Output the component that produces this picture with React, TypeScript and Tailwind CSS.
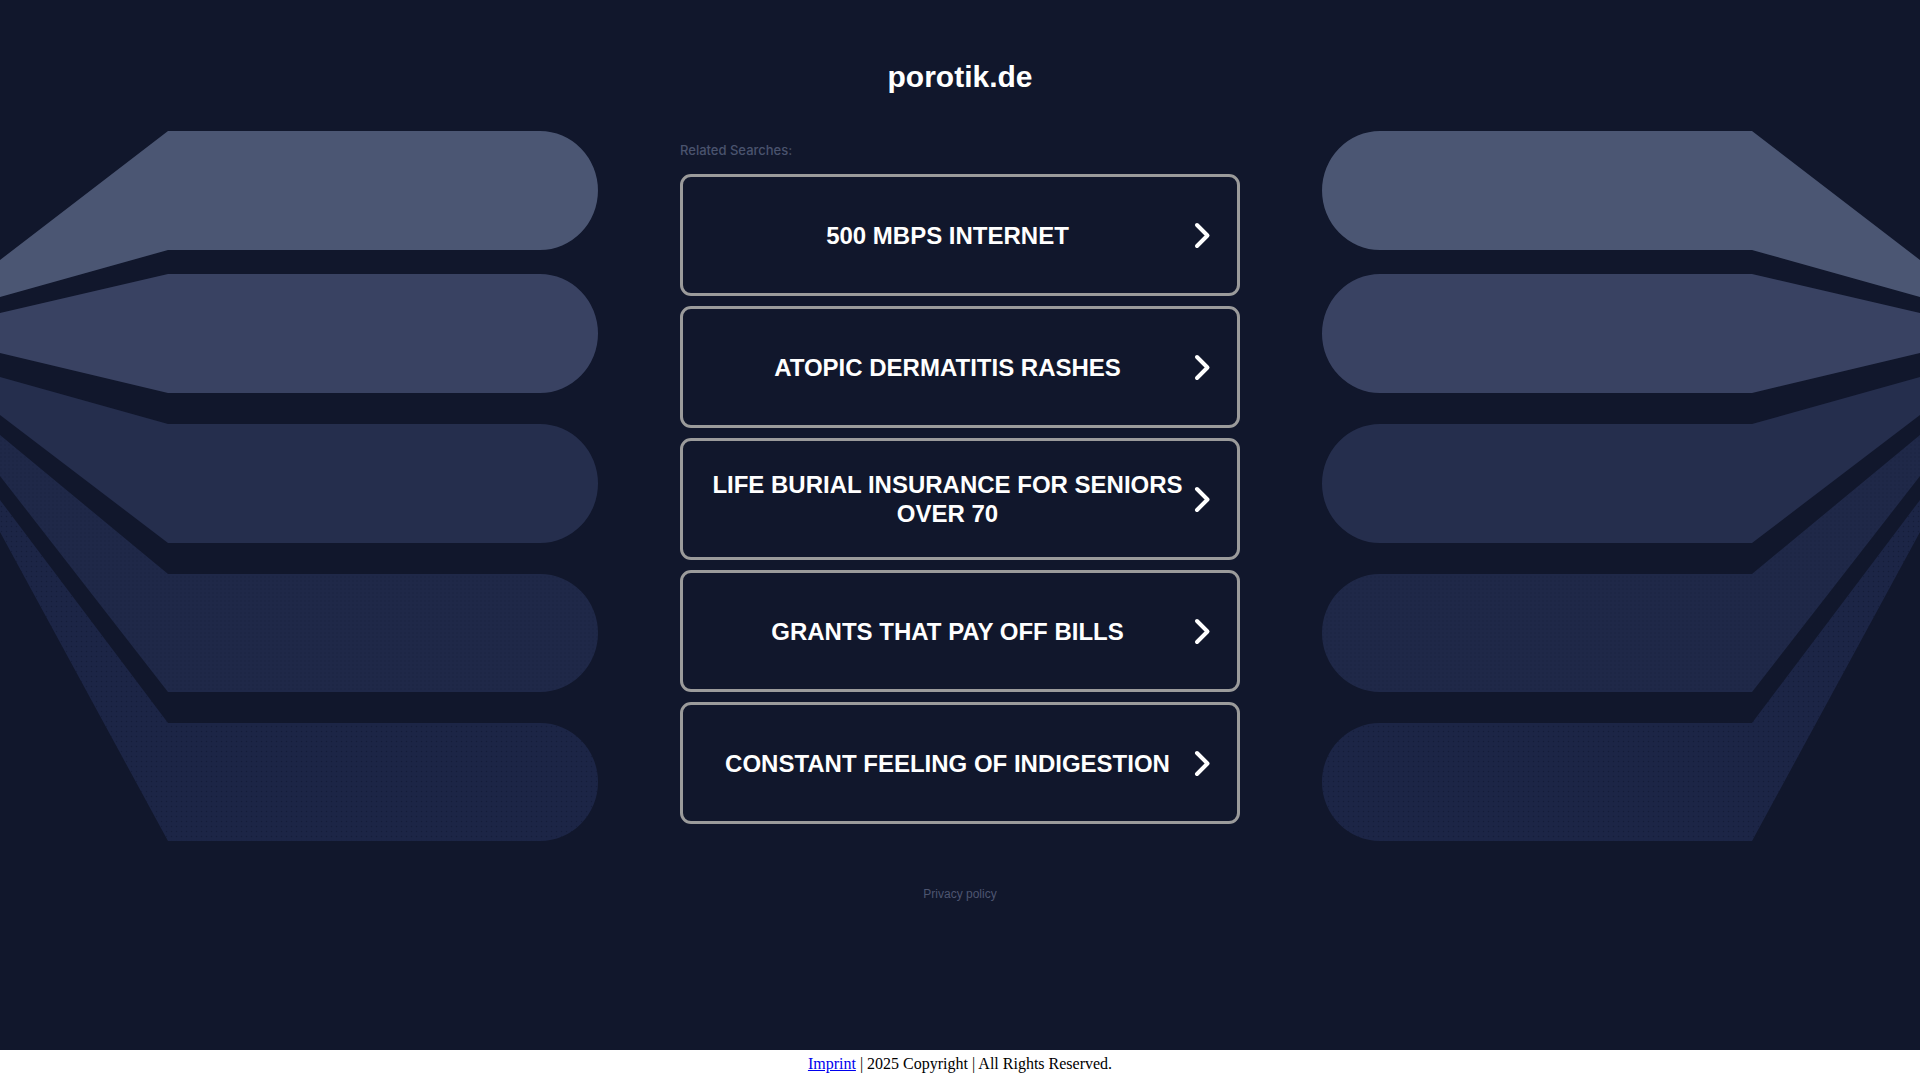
import React from 'react';

const searches = [
  '500 MBPS INTERNET',
  'ATOPIC DERMATITIS RASHES',
  'LIFE BURIAL INSURANCE FOR SENIORS OVER 70',
  'GRANTS THAT PAY OFF BILLS',
  'CONSTANT FEELING OF INDIGESTION',
];

// flat top, flat bottom, left-edge top, left-edge bottom
const bands: [number, number, number, number][] = [
  [131, 250, 260, 297],
  [274, 393, 313, 353],
  [424, 543, 377, 415],
  [574, 692, 435, 476],
  [723, 841, 500, 532],
];

const bandPath = ([t, b, lt, lb]: [number, number, number, number]) =>
  `M0 ${lt} L168 ${t} L540 ${t} A58 ${(b - t) / 2} 0 0 1 540 ${b} L168 ${b} L0 ${lb} Z`;

const Fan: React.FC<{ id: string; flip?: boolean }> = ({ id, flip = false }) => (
  <svg
    width="600"
    height="720"
    viewBox="0 131 600 720"
    className={flip ? 'shrink-0 -scale-x-100' : 'shrink-0'}
  >
    <defs>
      <pattern id={`${id}-d4`} width="4" height="4" patternUnits="userSpaceOnUse">
        <rect width="4" height="4" fill="#1f2848" />
        <circle cx="1" cy="1" r="0.7" fill="#19213f" />
      </pattern>
      <pattern id={`${id}-d5`} width="5" height="5" patternUnits="userSpaceOnUse">
        <rect width="5" height="5" fill="#1c2546" />
        <circle cx="1.5" cy="1.5" r="0.8" fill="#151d3a" />
      </pattern>
    </defs>
    <path d={bandPath(bands[0])} fill="#4b5673" />
    <path d={bandPath(bands[1])} fill="#394262" />
    <path d={bandPath(bands[2])} fill="#252e4d" />
    <path d={bandPath(bands[3])} fill={`url(#${id}-d4)`} />
    <path d={bandPath(bands[4])} fill={`url(#${id}-d5)`} />
  </svg>
);

const Chevron = () => (
  <svg width="17" height="27" viewBox="0 0 17 27" className="ml-[2px] shrink-0">
    <polyline
      points="3,3 13.5,13.5 3,24"
      fill="none"
      stroke="#ffffff"
      strokeWidth="4"
      strokeLinecap="round"
      strokeLinejoin="round"
    />
  </svg>
);

export default function App() {
  return (
    <div className="min-h-screen flex flex-col bg-[#11172c] font-['Liberation_Sans',Arial,sans-serif]">
      <main className="flex-1 flex flex-col">
        <h1 className="pt-[60px] text-center text-[30px] leading-[34px] font-bold text-white">
          porotik.de
        </h1>
        <div className="mt-[37px] flex justify-between">
          <Fan id="left" />
          <section className="w-[560px] shrink-0">
            <p className="mt-[11px] text-[13px] leading-4 font-medium text-[#4a536e] font-['Inter',sans-serif]">
              Related Searches:
            </p>
            <div className="mt-4 flex flex-col gap-[10px]">
              {searches.map((s) => (
                <a
                  key={s}
                  href="#"
                  className="flex h-[122px] items-center rounded-[11px] border-[3px] border-[#9b9b9b] pl-5 pr-[26px]"
                >
                  <span className="flex-1 text-center text-2xl leading-[29px] font-bold text-white">
                    {s}
                  </span>
                  <Chevron />
                </a>
              ))}
            </div>
            <p className="mt-[63px] text-center text-xs leading-[14px] text-[#4d5570]">
              Privacy policy
            </p>
          </section>
          <Fan id="right" flip />
        </div>
      </main>
      <footer className="h-[30px] bg-white text-center font-['Liberation_Serif','Times_New_Roman',serif] text-base leading-[28px] text-black">
        <a href="#" className="text-[#0000ee] underline">
          Imprint
        </a>{' '}
        | 2025 Copyright | All Rights Reserved.
      </footer>
    </div>
  );
}
